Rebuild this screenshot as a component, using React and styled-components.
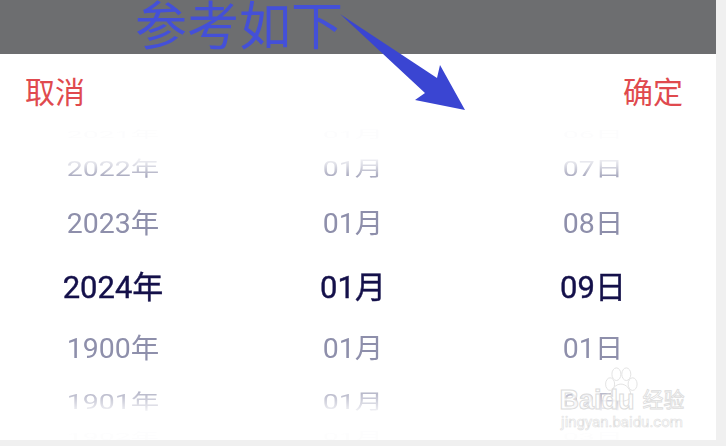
import React from "react";
import styled, { createGlobalStyle } from "styled-components";

const GlobalStyle = createGlobalStyle`
  html, body {
    margin: 0;
    height: 100%;
    background: #f0f0f0;
    overflow: hidden;
  }
  body {
    font-family: Roboto, "Noto Sans CJK SC", sans-serif;
  }
`;

const columns = [
  { key: "year", values: ["2021年", "2022年", "2023年", "2024年", "1900年", "1901年", "1902年"] },
  { key: "month", values: ["01月", "01月", "01月", "01月", "01月", "01月", "01月"] },
  { key: "day", values: ["06日", "07日", "08日", "09日", "01日", "02日", "03日"] },
];

// wheel rows get flatter towards the edges
const rows = [
  { height: 20, squash: 0.35 },
  { height: 48, squash: 0.72 },
  { height: 62, squash: 0.97 },
  { height: 64, squash: 1, active: true },
  { height: 60, squash: 0.97 },
  { height: 46, squash: 0.72 },
  { height: 24, squash: 0.35 },
];

export default function App() {
  return (
    <>
      <GlobalStyle />
      <Page>
        <Backdrop />
        <Sheet>
          <Header>
            <HeaderButton>取消</HeaderButton>
            <HeaderButton>确定</HeaderButton>
          </Header>
          <Wheels>
            {columns.map((column) => (
              <Wheel key={column.key}>
                {column.values.map((value, i) => (
                  <Row key={i} $height={rows[i].height}>
                    <RowLabel $squash={rows[i].squash} $active={rows[i].active}>
                      {value}
                    </RowLabel>
                  </Row>
                ))}
              </Wheel>
            ))}
          </Wheels>
        </Sheet>
        <Note>参考如下</Note>
        <Arrow viewBox="0 0 130 100" aria-hidden="true">
          <path d="M3 0 L100 64 L103 51 L128 96 L78 86 L88 79 Z" fill="#3a45d2" />
        </Arrow>
        <Watermark>
          <Paw viewBox="0 0 40 40" aria-hidden="true">
            <g fill="#fff" stroke="#e0e0e0" strokeWidth="1">
              <ellipse cx="9" cy="19" rx="5" ry="7" />
              <ellipse cx="16" cy="8" rx="5" ry="7" />
              <ellipse cx="27" cy="8" rx="5" ry="7" />
              <ellipse cx="34" cy="19" rx="5" ry="7" />
              <path d="M21 19c-6 0-11 6-11 12 0 5 5 7 11 7s11-2 11-7c0-6-5-12-11-12z" />
            </g>
          </Paw>
          <WatermarkLine>
            <BrandName>Baidu</BrandName>
            <BrandTag>经验</BrandTag>
          </WatermarkLine>
          <WatermarkUrl>jingyan.baidu.com</WatermarkUrl>
        </Watermark>
      </Page>
    </>
  );
}

const Page = styled.div`
  position: relative;
  width: 726px;
  height: 446px;
  overflow: hidden;
  background: #f0f0f0;
`;

const Backdrop = styled.div`
  width: 716px;
  height: 54px;
  background: #6d6e70;
`;

const Sheet = styled.div`
  width: 716px;
  height: 386px;
  background: #ffffff;
  overflow: hidden;
`;

const Header = styled.div`
  display: flex;
  justify-content: space-between;
  align-items: center;
  height: 71px;
  padding: 0 33px 0 25px;
`;

const HeaderButton = styled.span`
  font-size: 30px;
  line-height: 80px;
  margin-top: 6px;
  color: #e04a4e;
`;

const Wheels = styled.div`
  display: grid;
  grid-template-columns: repeat(3, 240px);
  margin-left: -7px;
  height: 315px;
  mask-image: linear-gradient(
    to bottom,
    rgba(0, 0, 0, 0.02) 0,
    rgba(0, 0, 0, 0.03) 30px,
    rgba(0, 0, 0, 0.3) 40px,
    rgba(0, 0, 0, 0.9) 55px,
    #000 70px,
    #000 240px,
    rgba(0, 0, 0, 0.8) 262px,
    rgba(0, 0, 0, 0.1) 287px,
    rgba(0, 0, 0, 0.02) 298px
  );
`;

const Wheel = styled.div`
  display: flex;
  flex-direction: column;
`;

const Row = styled.div`
  display: flex;
  justify-content: center;
  align-items: center;
  flex: none;
  height: ${(p) => p.$height}px;
`;

const RowLabel = styled.span`
  display: block;
  font-size: ${(p) => (p.$active ? 31 : 28.5)}px;
  line-height: 1;
  white-space: nowrap;
  color: ${(p) => (p.$active ? "#14104a" : "#8e8fab")};
  -webkit-text-stroke: ${(p) => (p.$active ? 0.4 : 0)}px #14104a;
  transform: scaleY(${(p) => p.$squash});
`;

const Note = styled.div`
  position: absolute;
  left: 135px;
  top: 1px;
  font-size: 52px;
  line-height: 54px;
  color: #4450d8;
  white-space: nowrap;
`;

const Arrow = styled.svg`
  position: absolute;
  left: 337px;
  top: 14px;
  width: 130px;
  height: 100px;
`;

const Watermark = styled.div`
  position: absolute;
  left: 556px;
  top: 367px;
  width: 132px;
  display: flex;
  flex-direction: column;
  align-items: center;
`;

const Paw = styled.svg`
  position: absolute;
  left: 44px;
  top: 0;
  width: 40px;
  height: 36px;
`;

const WatermarkLine = styled.div`
  position: relative;
  display: flex;
  align-items: center;
  gap: 8px;
  margin-top: 20px;
`;

const BrandName = styled.span`
  font-family: "Liberation Sans", sans-serif;
  font-size: 27px;
  font-weight: 700;
  line-height: 26px;
  color: rgba(255, 255, 255, 0.8);
  -webkit-text-stroke: 1px #dcdcdc;
`;

const BrandTag = styled.span`
  font-size: 21px;
  line-height: 26px;
  color: rgba(255, 255, 255, 0.85);
  -webkit-text-stroke: 0.8px #dcdcdc;
`;

const WatermarkUrl = styled.span`
  position: relative;
  font-size: 15px;
  line-height: 18px;
  color: rgba(255, 255, 255, 0.85);
  -webkit-text-stroke: 0.6px #e0e0e0;
`;
